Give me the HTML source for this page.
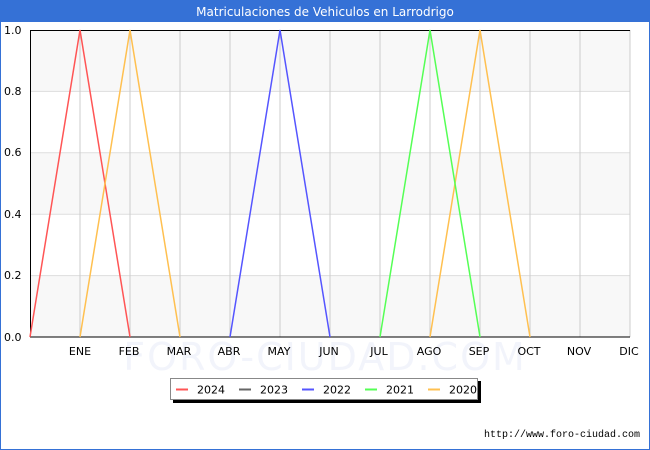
<!DOCTYPE html>
<html><head><meta charset="utf-8"><style>
html,body{margin:0;padding:0;background:#fff}
svg{display:block;font-family:"DejaVu Sans","Liberation Sans",sans-serif}
</style></head><body>
<svg width="650" height="450" viewBox="0 0 650 450" xmlns="http://www.w3.org/2000/svg">
<rect x="0" y="0" width="650" height="450" fill="#fff"/>
<rect x="0.5" y="0.5" width="649" height="449" fill="none" stroke="#3571d6"/>
<rect x="0" y="0" width="650" height="22" fill="#3571d6"/>
<text x="325" y="16" text-anchor="middle" font-size="12" fill="#fff">Matriculaciones de Vehiculos en Larrodrigo</text>
<rect x="30" y="30" width="600" height="61.4" fill="#f8f8f8"/>
<rect x="30" y="152.8" width="600" height="61.4" fill="#f8f8f8"/>
<rect x="30" y="275.6" width="600" height="61.4" fill="#f8f8f8"/>
<g stroke="#ddd" stroke-width="1">
<line x1="30" y1="91.4" x2="630" y2="91.4"/><line x1="30" y1="152.8" x2="630" y2="152.8"/>
<line x1="30" y1="214.2" x2="630" y2="214.2"/><line x1="30" y1="275.6" x2="630" y2="275.6"/>
</g>
<g stroke="#ccc" stroke-width="1">
<line x1="80" y1="30" x2="80" y2="337"/><line x1="130" y1="30" x2="130" y2="337"/>
<line x1="180" y1="30" x2="180" y2="337"/><line x1="230" y1="30" x2="230" y2="337"/>
<line x1="280" y1="30" x2="280" y2="337"/><line x1="330" y1="30" x2="330" y2="337"/>
<line x1="380" y1="30" x2="380" y2="337"/><line x1="430" y1="30" x2="430" y2="337"/>
<line x1="480" y1="30" x2="480" y2="337"/><line x1="530" y1="30" x2="530" y2="337"/>
<line x1="580" y1="30" x2="580" y2="337"/><line x1="630" y1="30" x2="630" y2="337"/>
</g>
<text x="325" y="370" text-anchor="middle" font-size="38" fill="#f2f4fb" letter-spacing="2">FORO-CIUDAD.COM</text>
<line x1="30" y1="30.5" x2="630" y2="30.5" stroke="#000"/>
<line x1="30.5" y1="30" x2="30.5" y2="337" stroke="#000"/>
<line x1="30" y1="337" x2="630" y2="337" stroke="#000"/>
<g fill="none" stroke-width="1.5">
<polyline points="30,337 80,30 130,337" stroke="#ff5555"/>
<polyline points="80,337 130,30 180,337" stroke="#ffc050"/>
<polyline points="430,337 480,30 530,337" stroke="#ffc050"/>
<polyline points="230,337 280,30 330,337" stroke="#5555ff"/>
<polyline points="380,337 430,30 480,337" stroke="#55ff55"/>
</g>
<g font-size="11" fill="#000">
<text x="4" y="34">1.0</text><text x="4" y="95">0.8</text><text x="4" y="156">0.6</text>
<text x="4" y="218">0.4</text><text x="4" y="279">0.2</text><text x="4" y="341">0.0</text>
</g>
<g font-size="11" fill="#000" text-anchor="middle">
<text x="80" y="355">ENE</text><text x="129" y="355">FEB</text><text x="179" y="355">MAR</text>
<text x="229" y="355">ABR</text><text x="279" y="355">MAY</text><text x="329" y="355">JUN</text>
<text x="379" y="355">JUL</text><text x="429" y="355">AGO</text><text x="479" y="355">SEP</text>
<text x="529" y="355">OCT</text><text x="579" y="355">NOV</text><text x="629" y="355">DIC</text>
</g>
<rect x="173" y="381" width="308" height="22" fill="#000"/>
<rect x="170.5" y="378.5" width="307" height="21" fill="#fff" stroke="#888"/>
<g stroke-width="2">
<line x1="176" y1="389.5" x2="188" y2="389.5" stroke="#ff5555"/>
<line x1="239" y1="389.5" x2="251" y2="389.5" stroke="#666"/>
<line x1="302" y1="389.5" x2="314" y2="389.5" stroke="#5555ff"/>
<line x1="365" y1="389.5" x2="377" y2="389.5" stroke="#55ff55"/>
<line x1="428" y1="389.5" x2="440" y2="389.5" stroke="#ffc050"/>
</g>
<g font-size="11" fill="#000">
<text x="197" y="393.5">2024</text><text x="260" y="393.5">2023</text><text x="323" y="393.5">2022</text>
<text x="386" y="393.5">2021</text><text x="449" y="393.5">2020</text>
</g>
<text x="640" y="437" text-anchor="end" font-size="10" font-family="Liberation Mono,monospace" fill="#000">http://www.foro-ciudad.com</text>
</svg>
</body></html>
